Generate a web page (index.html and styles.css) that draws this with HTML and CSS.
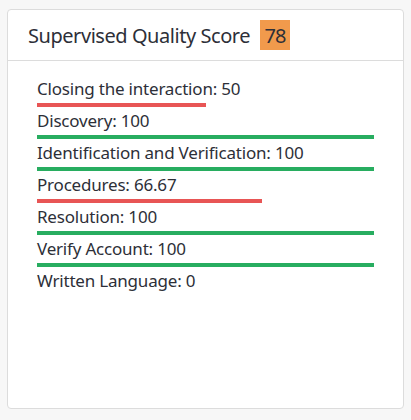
FILE: index.html
```html
<html>
	<head>
		<link rel="stylesheet" href="styles.css">
	</head>
	<body>

		<div class="card">
			<div class="cardHeader">
				<span class="cardTitle">Supervised Quality Score</span>
				<span class="badge">78</span>
			</div>

			<div class="cardBody">
				<div class="scoreRow">
					<div class="scoreLabel">Closing the interaction: 50</div>
					<div class="scoreBar barRed" style="width: 50%"></div>
				</div>
				<div class="scoreRow">
					<div class="scoreLabel">Discovery: 100</div>
					<div class="scoreBar barGreen" style="width: 100%"></div>
				</div>
				<div class="scoreRow">
					<div class="scoreLabel">Identification and Verification: 100</div>
					<div class="scoreBar barGreen" style="width: 100%"></div>
				</div>
				<div class="scoreRow">
					<div class="scoreLabel">Procedures: 66.67</div>
					<div class="scoreBar barRed" style="width: 66.67%"></div>
				</div>
				<div class="scoreRow">
					<div class="scoreLabel">Resolution: 100</div>
					<div class="scoreBar barGreen" style="width: 100%"></div>
				</div>
				<div class="scoreRow">
					<div class="scoreLabel">Verify Account: 100</div>
					<div class="scoreBar barGreen" style="width: 100%"></div>
				</div>
				<div class="scoreRow">
					<div class="scoreLabel">Written Language: 0</div>
					<div class="scoreBar barRed" style="width: 0%"></div>
				</div>
			</div>
		</div>

	</body>
</html>
```

FILE: styles.css
```css
body {
	margin: 0;
	padding: 9px 7px 11px 7px;
	background-color: #f7f7f7;
	font-family: "Noto Sans", sans-serif;
	color: #2d2f38;
}

.card {
	height: 400px;
	box-sizing: border-box;
	background-color: #fff;
	border: 1px solid #dcdcdc;
	border-radius: 4px;
}

.cardHeader {
	display: flex;
	align-items: center;
	padding: 10px 20px;
	border-bottom: 1px solid #dcdcdc;
}

.cardTitle {
	font-size: 20px;
	letter-spacing: -0.45px;
	padding-top: 1px;
}

.badge {
	display: flex;
	align-items: center;
	justify-content: center;
	width: 30px;
	height: 30px;
	margin-left: 10px;
	background-color: #f19a4c;
	font-size: 20px;
	letter-spacing: -1px;
}

.cardBody {
	padding: 16px 29px 0 29px;
}

.scoreRow {
	height: 32px;
}

.scoreLabel {
	height: 24px;
	line-height: 24px;
	margin-bottom: 2px;
	font-size: 17px;
	letter-spacing: -0.2px;
	white-space: nowrap;
}

.scoreBar {
	height: 4px;
}

.barRed {
	background-color: #e85555;
}

.barGreen {
	background-color: #28ad60;
}
```
